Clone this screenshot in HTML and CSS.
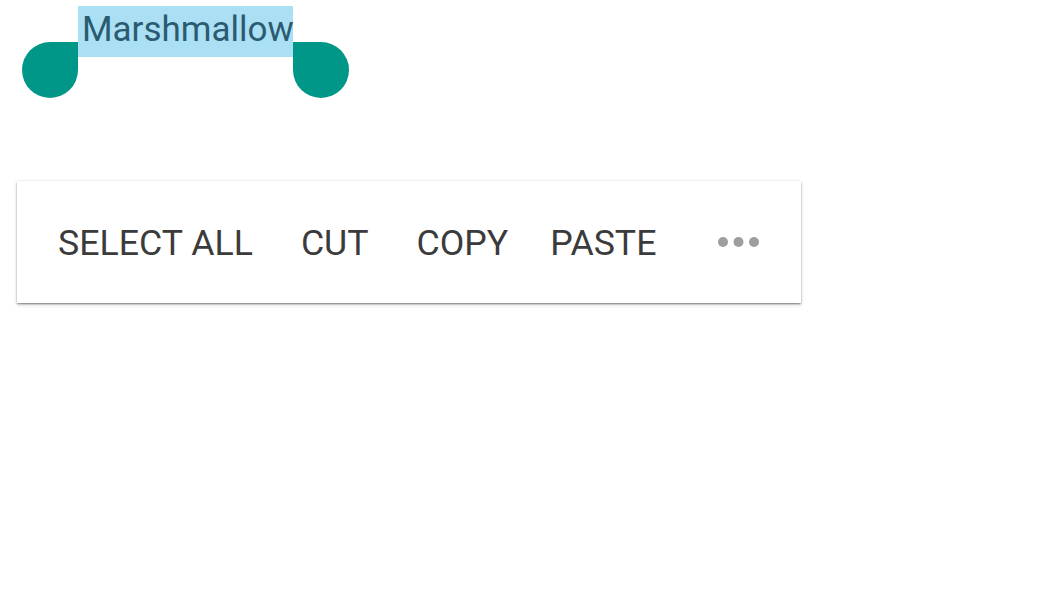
FILE: index.html
```html
<!DOCTYPE html>
<html>
<head>
<meta charset="utf-8">
<link rel="stylesheet" href="styles.css">
</head>
<body>
<div class="field">
  <span class="sel">Marshmallow</span>
  <span class="handle handle-left"></span>
  <span class="handle handle-right"></span>
</div>
<div class="menu">
  <span class="item">SELECT ALL</span>
  <span class="item">CUT</span>
  <span class="item">COPY</span>
  <span class="item">PASTE</span>
  <span class="more">
    <svg width="42" height="10" viewBox="0 0 42 10"><circle cx="5" cy="5" r="5" fill="#9e9e9e"/><circle cx="20.5" cy="5" r="5" fill="#9e9e9e"/><circle cx="36" cy="5" r="5" fill="#9e9e9e"/></svg>
  </span>
</div>
</body>
</html>
```
FILE: styles.css
```css
html, body {
  margin: 0;
  padding: 0;
  background: #ffffff;
}
body {
  font-family: Roboto, "Liberation Sans", sans-serif;
  min-height: 600px;
}
.field {
  position: relative;
  margin: 6px 0 0 78px;
  height: 51px;
  width: 215px;
}
.sel {
  display: block;
  width: 211px;
  height: 51px;
  padding-left: 4px;
  background: #abdff3;
  color: #2a5b70;
  font-size: 35px;
  line-height: 48px;
  white-space: nowrap;
}
.handle {
  position: absolute;
  top: 36px;
  width: 56px;
  height: 56px;
  background: #009688;
}
.handle-left {
  left: -56px;
  border-radius: 28px 0 28px 28px;
}
.handle-right {
  left: 215px;
  border-radius: 0 28px 28px 28px;
}
.menu {
  display: flex;
  align-items: center;
  box-sizing: border-box;
  margin: 124px 0 0 17px;
  width: 784px;
  height: 122px;
  padding: 4px 41px 0 41px;
  background: #ffffff;
  box-shadow: 0 1.5px 1.5px rgba(0,0,0,0.3), 0 2px 4px rgba(0,0,0,0.15), 0 0 2px rgba(0,0,0,0.12);
}
.item {
  font-size: 35.7px;
  color: #3b3b3b;
  margin-right: 48px;
  white-space: nowrap;
  line-height: 1;
}
.item:nth-child(3) {
  margin-right: 42px;
}
.more {
  margin-left: auto;
  display: flex;
  align-items: center;
  padding-bottom: 4px;
}
.more svg {
  display: block;
}
```
